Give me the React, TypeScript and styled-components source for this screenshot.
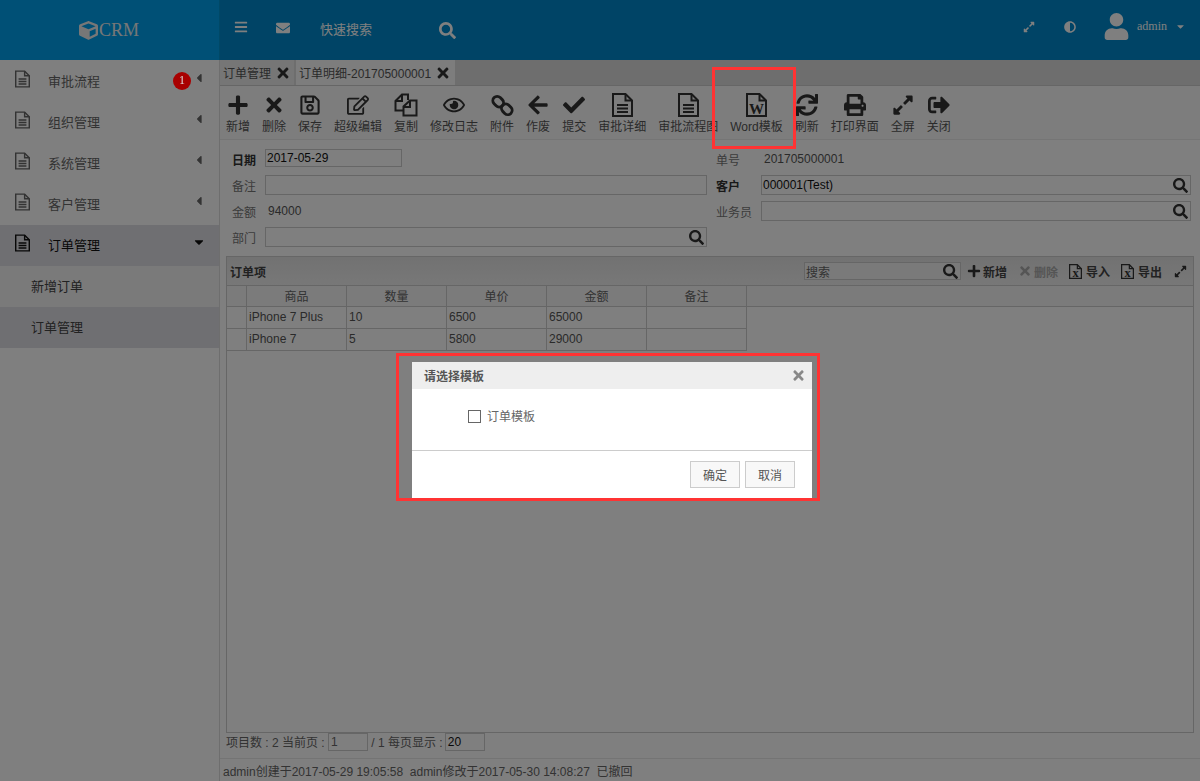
import styled, { createGlobalStyle } from "styled-components";
import {
  FaAdjust,
  FaArrowLeft,
  FaBars,
  FaCaretDown,
  FaCaretLeft,
  FaCheck,
  FaCube,
  FaEnvelope,
  FaExpandAlt,
  FaPlus,
  FaPrint,
  FaRegEdit,
  FaRegEye,
  FaRegSave,
  FaSearch,
  FaSignOutAlt,
  FaSync,
  FaTimes,
  FaUser,
} from "react-icons/fa";

const GlobalStyle = createGlobalStyle`
  html, body {
    margin: 0;
    padding: 0;
    height: 100%;
    overflow: hidden;
  }
  body {
    font-family: "Liberation Sans", "Noto Sans CJK SC", sans-serif;
    font-size: 12px;
    color: #666;
    background: #fff;
  }
  * {
    box-sizing: border-box;
  }
`;

const Page = styled.div`
  width: 1200px;
  height: 781px;
  display: flex;
  flex-direction: column;
`;

const TopBar = styled.header`
  height: 60px;
  flex: none;
  display: flex;
  align-items: center;
  background: #0089cc;
  color: #fff;
`;

const Logo = styled.div`
  width: 220px;
  height: 100%;
  display: flex;
  align-items: center;
  justify-content: center;
  gap: 1px;
  background: #00a0ec;
  border-right: 1px solid #0090cc;
  font-family: "Liberation Serif", serif;
  font-size: 18px;
  color: #eee;
  padding-right: 1px;
  svg {
    font-size: 19px;
  }
`;

const TopLeft = styled.div`
  display: flex;
  align-items: center;
  padding: 0 0 4px 14px;
  font-size: 13px;
  flex: 1;
  svg {
    flex: none;
  }
`;

const BarsIcon = styled(FaBars)`
  font-size: 14px;
  margin-top: -2px;
`;

const TopSearchLabel = styled.span`
  margin: 0 67px 0 30px;
`;

const TopSearchIcon = styled(FaSearch)`
  font-size: 17px;
  margin-top: 5px;
`;

const MailIcon = styled(FaEnvelope)`
  margin-left: 28px;
  font-size: 14px;
`;

const TopRight = styled.div`
  display: flex;
  align-items: center;
  padding-right: 14px;
  padding-bottom: 7px;
`;

const UserBlock = styled.div`
  display: flex;
  align-items: center;
  margin-left: 27px;
  font-family: "Liberation Serif", serif;
  font-size: 12px;
`;

const UserName = styled.span`
  margin: 0 8px 0 7px;
`;

const TopIconGap = styled.span`
  display: flex;
  margin-left: 29px;
`;

const Body = styled.div`
  flex: 1;
  display: flex;
  min-height: 0;
`;

const Sidebar = styled.nav`
  width: 220px;
  flex: none;
  padding-top: 1px;
  background: #fff;
  border-right: 1px solid #ddd;
`;

const MenuRow = styled.div<{ $active?: boolean }>`
  height: 41px;
  display: flex;
  align-items: center;
  padding: 0 15px;
  font-size: 13px;
  color: ${(props) => (props.$active ? "#111" : "#666")};
  background: ${(props) => (props.$active ? "#dfdfe4" : "transparent")};
  > svg {
    margin-right: 18px;
    flex: none;
    position: relative;
    top: -3px;
  }
`;

const MenuLabel = styled.span`
  flex: 1;
  padding-bottom: 2px;
`;

const Badge = styled.span`
  width: 18px;
  height: 18px;
  border-radius: 50%;
  background: #a80000;
  color: #ddd;
  font-family: "Liberation Serif", serif;
  font-size: 12px;
  display: flex;
  align-items: center;
  justify-content: center;
  margin-right: 3px;
  position: relative;
  z-index: 20;
  top: -1px;
`;

const Caret = styled.span`
  display: flex;
  justify-content: center;
  width: 10px;
  font-size: 14px;
  position: relative;
  top: -4px;
`;

const SubRow = styled.div<{ $active?: boolean }>`
  height: 41px;
  display: flex;
  align-items: center;
  padding: 0 0 2px 31px;
  font-size: 13px;
  color: #444;
  background: ${(props) => (props.$active ? "#dfdfe4" : "#f4f4f4")};
`;

const Main = styled.main`
  flex: 1;
  min-width: 0;
  display: flex;
  flex-direction: column;
`;

const TabStrip = styled.div`
  height: 26px;
  flex: none;
  display: flex;
  align-items: flex-end;
  background: #dcdcdc;
  border-bottom: 1px solid #ccc;
`;

const Tab = styled.div<{ $active?: boolean }>`
  height: 25px;
  display: flex;
  align-items: center;
  gap: 4px;
  padding: 0 ${(props) => (props.$active ? 4 : 3)}px 0 3px;
  font-size: 12px;
  color: #555;
  background: ${(props) => (props.$active ? "#fafafa" : "#ececec")};
  border-right: 1px solid #ddd;
  border-left: ${(props) => (props.$active ? "1px solid #ddd" : "none")};
  svg {
    font-size: 16px;
    color: #333;
  }
`;

const Toolbar = styled.div`
  height: 54px;
  flex: none;
  display: flex;
  gap: 12px;
  padding: 8px 0 0 6px;
  background: #fafafa;
  border-bottom: 1px solid #eaeaea;
`;

const ToolButton = styled.div`
  display: flex;
  flex-direction: column;
  align-items: center;
  color: #555;
  font-size: 12px;
  white-space: nowrap;
`;

const IconSlot = styled.span`
  height: 22px;
  margin-bottom: 1px;
  display: flex;
  align-items: center;
  justify-content: center;
  color: #333;
  svg {
    width: 22px;
    height: 22px;
    flex: none;
  }
`;

const DocSvg = styled.svg<{ $width: number; $height: number }>`
  && {
    width: ${(props) => props.$width}px;
    height: ${(props) => props.$height}px;
    flex: none;
  }
  fill: none;
  stroke: currentColor;
  stroke-width: 2;
`;

const ChainSvg = styled(DocSvg)`
  stroke-width: 3;
`;

const DocLetter = styled.text`
  fill: currentColor;
  stroke: none;
  font-family: "Liberation Serif", serif;
  font-weight: 700;
  text-anchor: middle;
`;

const DocIcon = ({
  width = 21,
  height = 24,
  letter,
  letterSize = 12,
}: {
  width?: number;
  height?: number;
  letter?: string;
  letterSize?: number;
}) => (
  <DocSvg viewBox="0 0 21 24" $width={width} $height={height}>
    <path d="M1 1h12.5L20 7.500V23H1z" />
    <path d="M13.500 1v6.500H20" />
    {letter ? (
      <DocLetter x="10.500" y="20.500" fontSize={letterSize}>
        {letter}
      </DocLetter>
    ) : (
      <path d="M5 12h11M5 15.500h11M5 19h11" />
    )}
  </DocSvg>
);

const CopyIcon = () => (
  <DocSvg viewBox="0 0 24 24" $width={24} $height={24}>
    <path d="M9 17.500H1.500V8L8 1.500h6V7" />
    <path d="M8 1.500V8H1.500" />
    <path d="M16 7.500h6.500v15h-13v-9z" />
    <path d="M16 7.500V14H9.500" />
  </DocSvg>
);

const ChainIcon = () => (
  <ChainSvg viewBox="0 0 24 24" $width={23} $height={23}>
    <rect x="1.500" y="3.500" width="12" height="9" rx="4.500" transform="rotate(45 7.500 8)" />
    <rect x="10.500" y="11.500" width="12" height="9" rx="4.500" transform="rotate(45 16.500 16)" />
  </ChainSvg>
);

const Form = styled.div`
  flex: none;
  display: grid;
  grid-template-columns: 480px 1fr;
  grid-auto-rows: 20px;
  row-gap: 6px;
  padding: 9px 9px 9px 12px;
  background: #fff;
`;

const Field = styled.div`
  display: flex;
  align-items: center;
  min-width: 0;
`;

const FieldLabel = styled.label<{ $width?: number; $strong?: boolean }>`
  width: ${(props) => props.$width ?? 33}px;
  flex: none;
  color: ${(props) => (props.$strong ? "#333" : "#777")};
  font-weight: ${(props) => (props.$strong ? 700 : 400)};
`;

const FieldValue = styled.span<{ $indent: number }>`
  margin-left: ${(props) => props.$indent}px;
  color: #555;
`;

const InputBox = styled.div<{ $narrow?: boolean }>`
  flex: ${(props) => (props.$narrow ? "none" : 1)};
  width: ${(props) => (props.$narrow ? "137px" : "auto")};
  height: ${(props) => (props.$narrow ? "18px" : "20px")};
  align-self: flex-start;
  display: flex;
  align-items: center;
  justify-content: space-between;
  padding: 0 2px 0 1px;
  border: 1px solid #ccc;
  color: #111;
  background: #fff;
  svg {
    font-size: 15px;
    color: #333;
  }
`;

const LeftCell = styled(Field)`
  padding-right: 5px;
`;

const RightCell = styled(Field)`
  padding-left: 4px;
`;

const Panel = styled.section`
  flex: 1;
  min-height: 0;
  margin: 0 6px;
  display: flex;
  flex-direction: column;
  border: 1px solid #ccc;
  background: #fff;
`;

const PanelHeader = styled.div`
  height: 29px;
  flex: none;
  display: flex;
  align-items: center;
  padding: 0 6px 0 3px;
  background: linear-gradient(#e4e4e4, #f0f0f0);
  border-bottom: 1px solid #ccc;
`;

const PanelTitle = styled.span`
  flex: 1;
  font-weight: 700;
  color: #444;
`;

const SearchBox = styled.div`
  width: 157px;
  height: 18px;
  display: flex;
  align-items: center;
  justify-content: space-between;
  padding: 0 2px 0 1px;
  border: 1px solid #ccc;
  color: #666;
  background: #f4f4f4;
  margin-right: 6px;
  svg {
    font-size: 15px;
    color: #333;
  }
`;

const PanelAction = styled.span<{ $disabled?: boolean; $gap?: number }>`
  display: flex;
  align-items: center;
  gap: ${(props) => props.$gap ?? 2}px;
  margin-right: 11px;
  font-weight: 700;
  color: ${(props) => (props.$disabled ? "#aaa" : "#444")};
  svg {
    font-size: 14px;
    color: ${(props) => (props.$disabled ? "#aaa" : "#333")};
  }
`;

const PanelExpand = styled(FaExpandAlt)`
  font-size: 13px;
  color: #333;
  margin-left: 1px;
`;

const TableHead = styled.div`
  height: 21px;
  flex: none;
  border-bottom: 1px solid #ccc;
  background: #f6f6f6;
`;

const TableRow = styled.div`
  display: grid;
  grid-template-columns: 20px repeat(5, 100px);
  width: 521px;
  height: 100%;
`;

const DataRow = styled.div`
  height: 22px;
  flex: none;
  width: 520px;
  border-bottom: 1px solid #ccc;
  border-right: 1px solid #ccc;
`;

const HeadCell = styled.div`
  display: flex;
  align-items: center;
  justify-content: center;
  padding-bottom: 1px;
  color: #666;
  border-right: 1px solid #ccc;
`;

const DataCell = styled.div`
  display: flex;
  align-items: center;
  padding: 0 0 1px 2px;
  color: #555;
  border-right: 1px solid #ccc;
  &:last-child {
    border-right: 0;
  }
`;

const Pager = styled.div`
  height: 25px;
  flex: none;
  display: flex;
  align-items: flex-start;
  padding-left: 6px;
  background: #fff;
  color: #666;
  white-space: pre;
  span {
    line-height: 20px;
  }
`;

const PagerInput = styled.div<{ $dark?: boolean; $gap: number }>`
  width: 40px;
  height: 18px;
  margin-left: ${(props) => props.$gap}px;
  padding-left: 2px;
  line-height: 17px;
  border: 1px solid #ccc;
  color: ${(props) => (props.$dark ? "#111" : "#666")};
`;

const Footer = styled.div`
  height: 23px;
  flex: none;
  display: flex;
  align-items: center;
  padding-left: 3px;
  border-top: 1px solid #e8e8e8;
  color: #666;
  white-space: pre;
`;

const Overlay = styled.div`
  position: fixed;
  inset: 0;
  background: rgba(0, 0, 0, 0.5);
  z-index: 10;
`;

const Modal = styled.div`
  position: fixed;
  left: 412px;
  top: 362px;
  width: 400px;
  height: 136px;
  z-index: 12;
  background: #fff;
  display: flex;
  flex-direction: column;
`;

const ModalHeader = styled.div`
  height: 27px;
  flex: none;
  display: flex;
  align-items: center;
  justify-content: space-between;
  padding: 0 6px 0 12px;
  background: #eee;
  color: #555;
  font-weight: 700;
  svg {
    font-size: 15px;
    color: #888;
  }
`;

const ModalBody = styled.div`
  height: 62px;
  flex: none;
  display: flex;
  align-items: flex-start;
  gap: 6px;
  padding: 21px 0 0 56px;
  line-height: 15px;
  border-bottom: 1px solid #ccc;
  color: #666;
`;

const CheckBox = styled.span`
  width: 13px;
  height: 13px;
  border: 1px solid #666;
`;

const ModalFooter = styled.div`
  flex: 1;
  display: flex;
  justify-content: flex-end;
  gap: 5px;
  padding: 10px 17px 0 0;
`;

const ModalButton = styled.button`
  width: 50px;
  height: 27px;
  padding: 0;
  border: 1px solid #ccc;
  background: #f8f8f8;
  color: #555;
  font: inherit;
`;

const Marker = styled.div<{ $left: number; $top: number; $width: number; $height: number }>`
  position: fixed;
  left: ${(props) => props.$left}px;
  top: ${(props) => props.$top}px;
  width: ${(props) => props.$width}px;
  height: ${(props) => props.$height}px;
  border: 3px solid #ff3333;
  z-index: 14;
`;

const menus = ["审批流程", "组织管理", "系统管理", "客户管理"];

const tools = [
  { label: "新增", icon: <FaPlus /> },
  { label: "删除", icon: <FaTimes /> },
  { label: "保存", icon: <FaRegSave /> },
  { label: "超级编辑", icon: <FaRegEdit /> },
  { label: "复制", icon: <CopyIcon /> },
  { label: "修改日志", icon: <FaRegEye /> },
  { label: "附件", icon: <ChainIcon /> },
  { label: "作废", icon: <FaArrowLeft /> },
  { label: "提交", icon: <FaCheck /> },
  { label: "审批详细", icon: <DocIcon /> },
  { label: "审批流程图", icon: <DocIcon /> },
  { label: "Word模板", icon: <DocIcon letter="W" letterSize={15} /> },
  { label: "刷新", icon: <FaSync /> },
  { label: "打印界面", icon: <FaPrint /> },
  { label: "全屏", icon: <FaExpandAlt /> },
  { label: "关闭", icon: <FaSignOutAlt /> },
];

const rows = [
  { name: "iPhone 7 Plus", qty: "10", price: "6500", amount: "65000" },
  { name: "iPhone 7", qty: "5", price: "5800", amount: "29000" },
];

function App() {
  return (
    <>
      <GlobalStyle />
      <Page>
        <TopBar>
          <Logo>
            <FaCube />
            CRM
          </Logo>
          <TopLeft>
            <BarsIcon />
            <MailIcon />
            <TopSearchLabel>快速搜索</TopSearchLabel>
            <TopSearchIcon />
          </TopLeft>
          <TopRight>
            <FaExpandAlt size={12} />
            <TopIconGap>
              <FaAdjust size={12} />
            </TopIconGap>
            <UserBlock>
              <FaUser size={27} />
              <UserName>admin</UserName>
              <FaCaretDown size={11} />
            </UserBlock>
          </TopRight>
        </TopBar>
        <Body>
          <Sidebar>
            {menus.map((menu, index) => (
              <MenuRow key={menu}>
                <DocIcon width={15} height={18} />
                <MenuLabel>{menu}</MenuLabel>
                {index === 0 && <Badge>1</Badge>}
                <Caret>
                  <FaCaretLeft />
                </Caret>
              </MenuRow>
            ))}
            <MenuRow $active>
              <DocIcon width={15} height={18} />
              <MenuLabel>订单管理</MenuLabel>
              <Caret>
                <FaCaretDown />
              </Caret>
            </MenuRow>
            <SubRow>新增订单</SubRow>
            <SubRow $active>订单管理</SubRow>
          </Sidebar>
          <Main>
            <TabStrip>
              <Tab>
                订单管理
                <FaTimes />
              </Tab>
              <Tab $active>
                订单明细-201705000001
                <FaTimes />
              </Tab>
            </TabStrip>
            <Toolbar>
              {tools.map((tool) => (
                <ToolButton key={tool.label}>
                  <IconSlot>{tool.icon}</IconSlot>
                  {tool.label}
                </ToolButton>
              ))}
            </Toolbar>
            <Form>
              <LeftCell>
                <FieldLabel $strong>日期</FieldLabel>
                <InputBox $narrow>2017-05-29</InputBox>
              </LeftCell>
              <RightCell>
                <FieldLabel $width={48}>单号</FieldLabel>
                <FieldValue $indent={0}>201705000001</FieldValue>
              </RightCell>
              <LeftCell>
                <FieldLabel>备注</FieldLabel>
                <InputBox />
              </LeftCell>
              <RightCell>
                <FieldLabel $width={45} $strong>
                  客户
                </FieldLabel>
                <InputBox>
                  000001(Test)
                  <FaSearch />
                </InputBox>
              </RightCell>
              <LeftCell>
                <FieldLabel>金额</FieldLabel>
                <FieldValue $indent={3}>94000</FieldValue>
              </LeftCell>
              <RightCell>
                <FieldLabel $width={45}>业务员</FieldLabel>
                <InputBox>
                  <span />
                  <FaSearch />
                </InputBox>
              </RightCell>
              <LeftCell>
                <FieldLabel>部门</FieldLabel>
                <InputBox>
                  <span />
                  <FaSearch />
                </InputBox>
              </LeftCell>
            </Form>
            <Panel>
              <PanelHeader>
                <PanelTitle>订单项</PanelTitle>
                <SearchBox>
                  搜索
                  <FaSearch />
                </SearchBox>
                <PanelAction>
                  <FaPlus />
                  新增
                </PanelAction>
                <PanelAction $disabled>
                  <FaTimes />
                  删除
                </PanelAction>
                <PanelAction $gap={4}>
                  <DocIcon width={13} height={15} letter="x" letterSize={20} />
                  导入
                </PanelAction>
                <PanelAction $gap={4}>
                  <DocIcon width={13} height={15} letter="x" letterSize={20} />
                  导出
                </PanelAction>
                <PanelExpand />
              </PanelHeader>
              <TableHead>
                <TableRow>
                  <HeadCell />
                  <HeadCell>商品</HeadCell>
                  <HeadCell>数量</HeadCell>
                  <HeadCell>单价</HeadCell>
                  <HeadCell>金额</HeadCell>
                  <HeadCell>备注</HeadCell>
                </TableRow>
              </TableHead>
              {rows.map((row) => (
                <DataRow key={row.name}>
                  <TableRow>
                    <DataCell />
                    <DataCell>{row.name}</DataCell>
                    <DataCell>{row.qty}</DataCell>
                    <DataCell>{row.price}</DataCell>
                    <DataCell>{row.amount}</DataCell>
                    <DataCell />
                  </TableRow>
                </DataRow>
              ))}
            </Panel>
            <Pager>
              <span>项目数 : 2 当前页 : </span>
              <PagerInput $gap={0}>1</PagerInput>
              <span> / 1 每页显示 :</span>
              <PagerInput $gap={2} $dark>
                20
              </PagerInput>
            </Pager>
            <Footer>admin创建于2017-05-29 19:05:58  admin修改于2017-05-30 14:08:27  已撤回</Footer>
          </Main>
        </Body>
      </Page>
      <Overlay />
      <Modal>
        <ModalHeader>
          请选择模板
          <FaTimes />
        </ModalHeader>
        <ModalBody>
          <CheckBox />
          订单模板
        </ModalBody>
        <ModalFooter>
          <ModalButton>确定</ModalButton>
          <ModalButton>取消</ModalButton>
        </ModalFooter>
      </Modal>
      <Marker $left={712} $top={67} $width={84} $height={82} />
      <Marker $left={396} $top={353} $width={424} $height={148} />
    </>
  );
}

export default App;
